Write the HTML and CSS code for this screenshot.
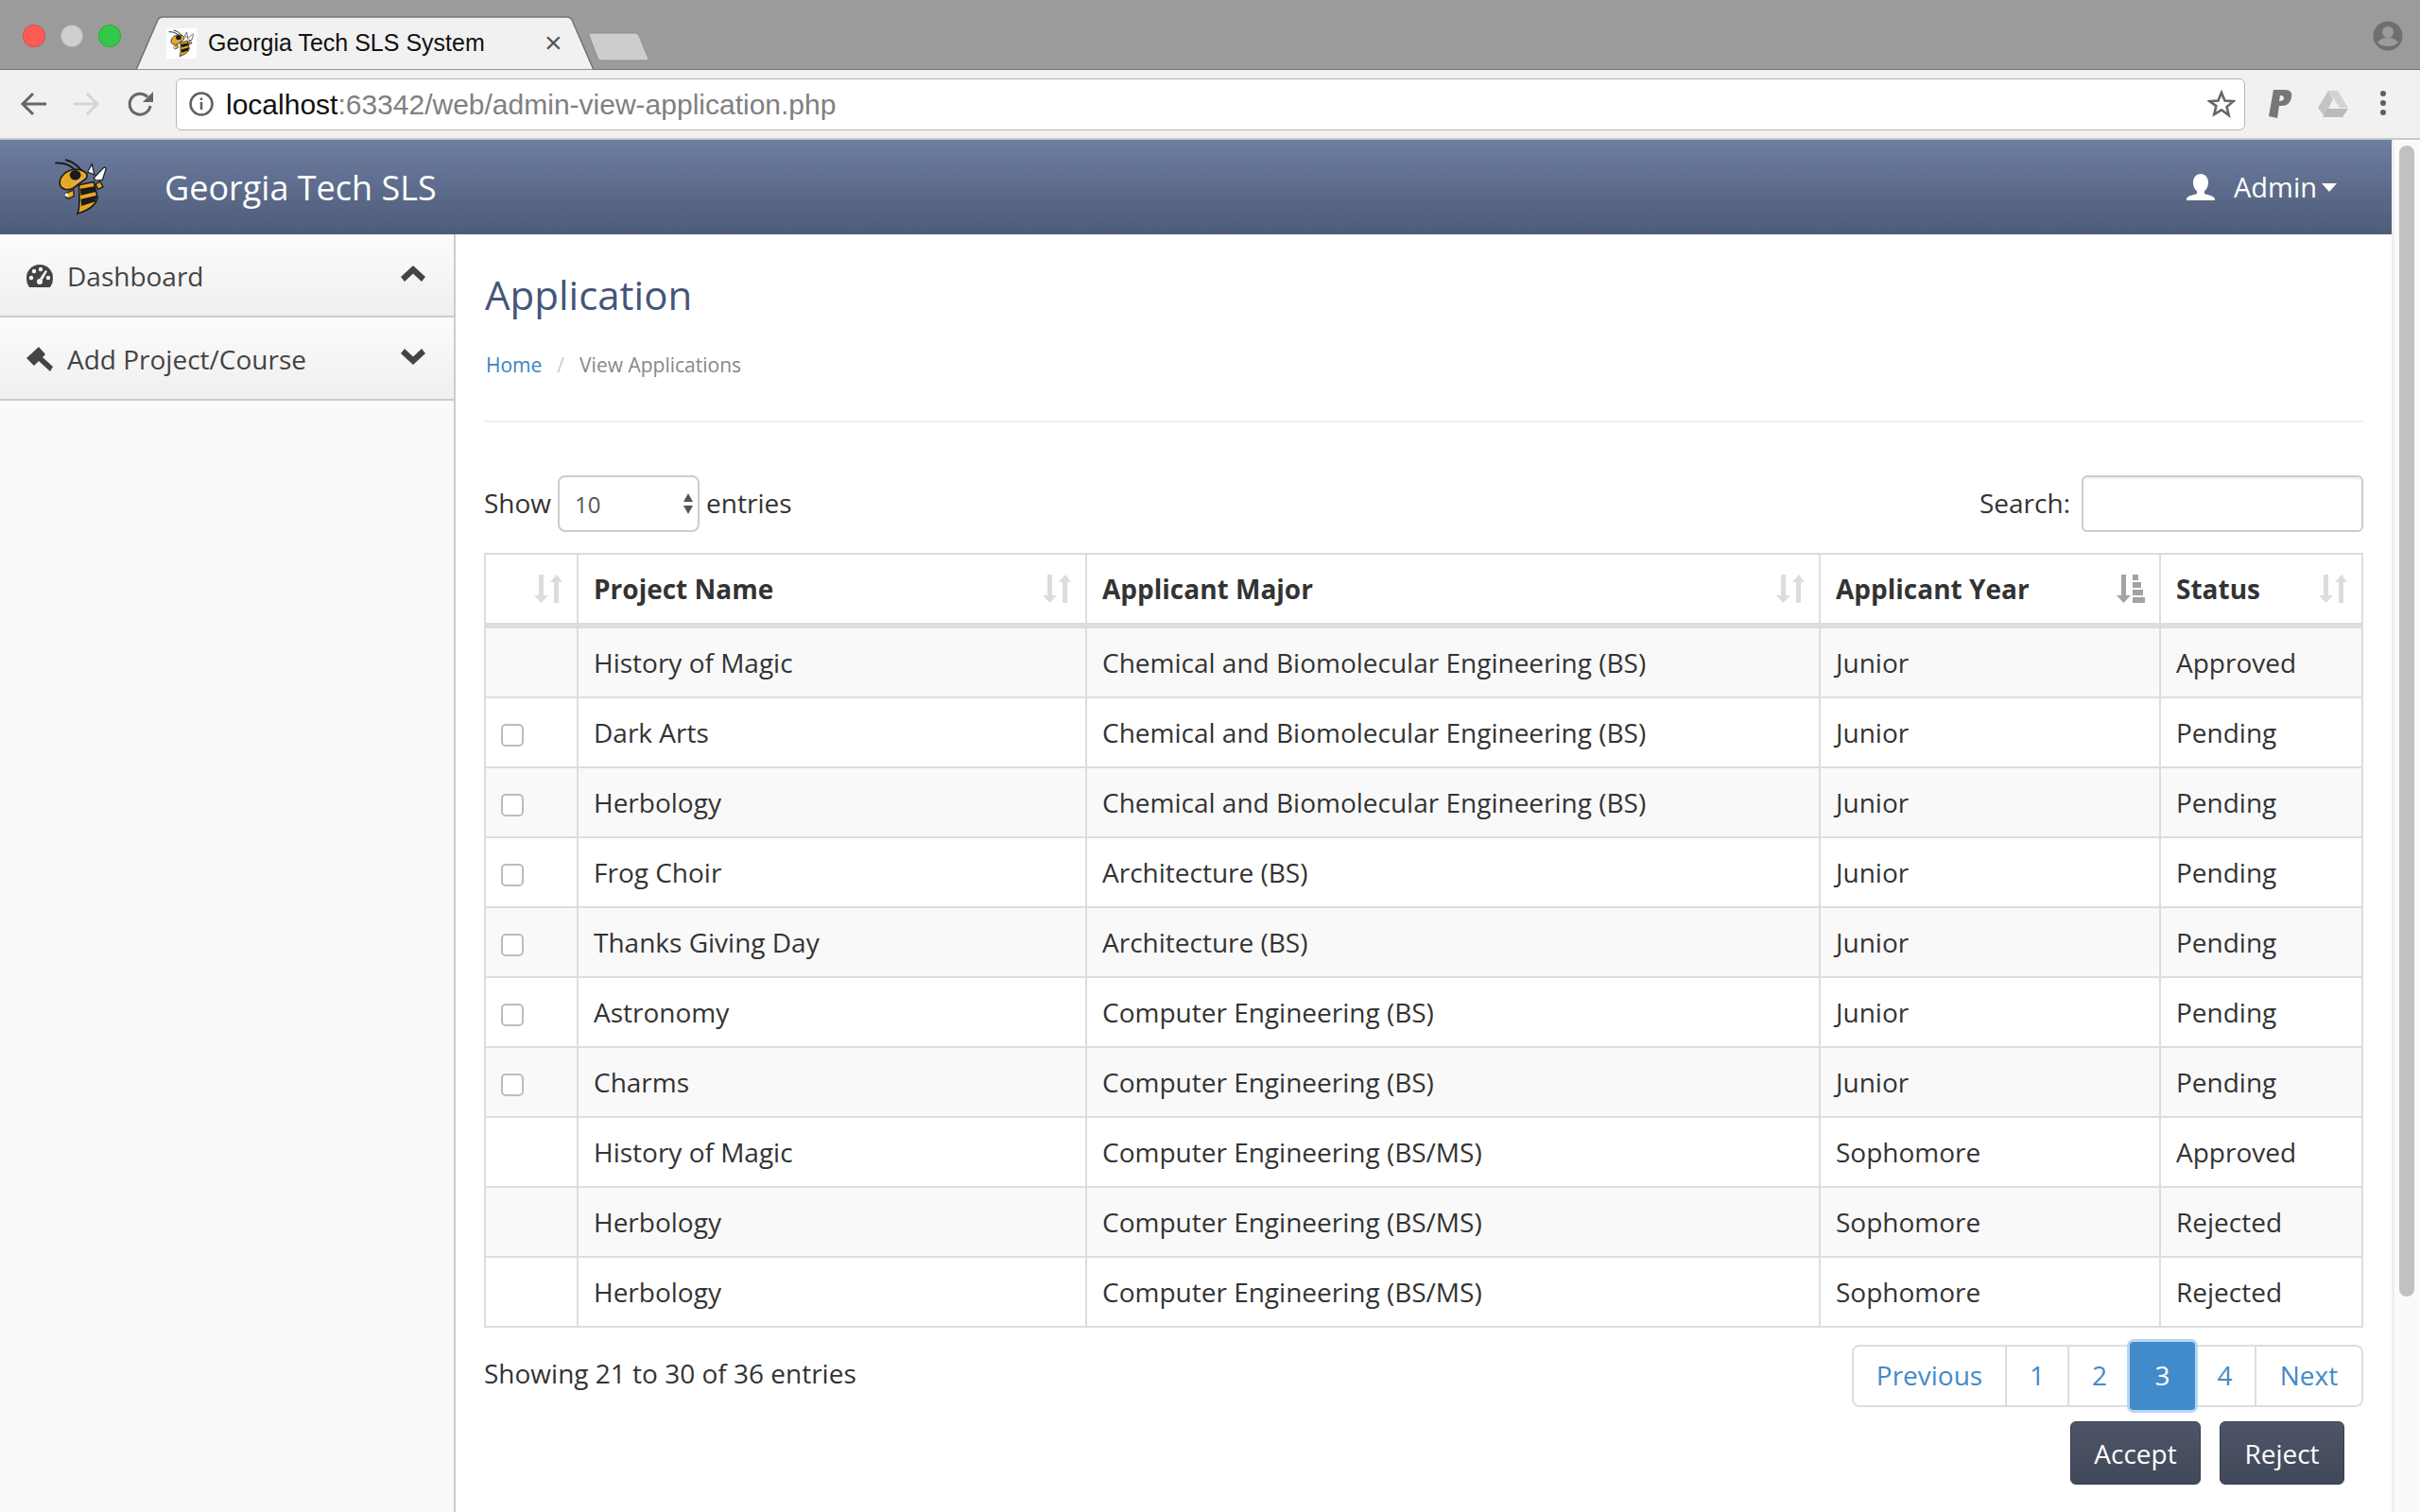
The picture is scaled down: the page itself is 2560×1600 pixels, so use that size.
FILE: index.html
```html
<!DOCTYPE html>
<html lang="en">
<head>
    <meta charset="UTF-8">
    <title>Georgia Tech SLS System</title>
    <link rel="stylesheet" href="styles.css">
</head>
<body>
    <svg class="defs" width="0" height="0">
        <symbol id="bee" viewBox="170 140 175 190">
            <path d="M240 182C225 165 200 155 175 157M258 180C245 165 228 152 208 147" fill="none" stroke="#1b1b1b" stroke-width="6" stroke-linecap="round"/>
            <path d="M278 186L292 160L300 195ZM298 205L332 170L338 174L326 212L304 214Z" fill="#fff" stroke="#222" stroke-width="4"/>
            <path d="M250 228L298 218L310 268C305 295 275 312 245 321C256 300 250 260 250 228Z" fill="#e9a823" stroke="#1b1b1b" stroke-width="5"/>
            <path d="M254 240L302 232L305 250L256 262ZM256 274L308 262L303 282L258 296Z" fill="#1b1b1b"/>
            <path d="M304 226L318 217L328 234L312 242Z" fill="#e9a823" stroke="#1b1b1b" stroke-width="4"/>
            <path d="M206 256L232 244L234 264L218 272C208 272 202 264 206 256Z" fill="#e9a823" stroke="#1b1b1b" stroke-width="4"/>
            <circle cx="210" cy="260" r="6" fill="#eee"/>
            <path d="M188 226C184 198 214 174 250 178C274 184 282 196 272 208L232 238C212 248 192 242 188 226Z" fill="#e9a823" stroke="#1b1b1b" stroke-width="5"/>
            <ellipse cx="238" cy="196" rx="18" ry="16" fill="#1b1b1b"/>
            <path d="M226 226L268 204" stroke="#bbb" stroke-width="3"/>
        </symbol>
        <symbol id="sort" viewBox="0 0 30 30">
            <path d="M5 0h5v22h5l-7.500 8L0 22h5zM17 8l7-8 6 8h-4v22h-5V8z"/>
        </symbol>
    </svg>

    <div class="browser">
        <div class="tabstrip">
            <div class="lights">
                <span class="light red"></span>
                <span class="light grey"></span>
                <span class="light green"></span>
            </div>
            <div class="tab">
                <svg class="tab-shape" viewBox="0 0 484 57" preserveAspectRatio="none">
                    <path d="M0 57L23 4C24 2 25 1 28 1H456C459 1 460 2 461 4L484 57Z" fill="#f1f1f1" stroke="#737373" stroke-width="1.500"/>
                </svg>
                <span class="favicon"><svg width="28" height="30"><use href="#bee"/></svg></span>
                <span class="tab-title">Georgia Tech SLS System</span>
                <span class="tab-close">×</span>
            </div>
            <svg class="newtab" width="66" height="32" viewBox="0 0 66 32">
                <path d="M2 2H50C52 2 53 3 54 5L64 29C64 30 63 31 62 31H14C12 31 11 30 10 28L1 4C1 3 1 2 2 2Z" fill="#cdcdcd" stroke="#8d8d8d"/>
            </svg>
            <svg class="profile" width="32" height="32" viewBox="0 0 32 32">
                <circle cx="16" cy="16" r="15.500" fill="#6f6f6f"/>
                <circle cx="16" cy="12" r="6" fill="#9b9b9b"/>
                <path d="M5 23c3-4 7-5 11-5s8 1 11 5c-3 3-7 4-11 4s-8-1-11-4z" fill="#9b9b9b"/>
            </svg>
        </div>

        <div class="toolbar">
            <svg class="tool" width="30" height="30" viewBox="0 0 30 30" fill="none" stroke="#666" stroke-width="3"><path d="M28 15H4M14 4L3 15l11 11"/></svg>
            <svg class="tool" width="30" height="30" viewBox="0 0 30 30" fill="none" stroke="#d4d4d4" stroke-width="3"><path d="M2 15h24M16 4l11 11-11 11"/></svg>
            <svg class="tool tool-reload" width="30" height="30" viewBox="0 0 30 30" fill="none"><path d="M25 17a11 11 0 1 1-3-9.500" stroke="#666" stroke-width="3"/><path d="M28 2v11H17z" fill="#666"/></svg>
            <div class="omnibox">
                <svg width="26" height="26" viewBox="0 0 26 26" fill="none" stroke="#5f5f5f" stroke-width="2.500"><circle cx="13" cy="13" r="11.500"/><path d="M13 11v8M13 6.500v2.500"/></svg>
                <span class="url"><b>localhost</b>:63342/web/admin-view-application.php</span>
                <svg class="star" width="30" height="30" viewBox="0 0 30 30" fill="none" stroke="#666" stroke-width="2.600"><path d="M15 3l3.500 8.500 9 .7-6.900 5.900 2.100 8.900L15 21.300 7.300 26l2.100-8.900L2.500 12.200l9-.7z"/></svg>
            </div>
            <div class="ext">
                <svg width="26" height="32" viewBox="0 0 26 32"><path d="M7 1h11c6 0 8 3 7 8-1 6-5 9-10 9h-3l-2 13-9-2L6 1z" fill="#777"/><path d="M13 7l-1 6c3 0 5-1 5-3s-1-3-4-3z" fill="#f1f1f1"/></svg>
                <svg width="32" height="28" viewBox="0 0 32 28"><path d="M11 0h10l11 18h-9z" fill="#d3d3d3"/><path d="M11 0l5 9-9 18-7-9z" fill="#c4c4c4"/><path d="M10 19h22l-6 9H5z" fill="#bbb"/></svg>
                <svg class="ext-menu" width="6" height="28" viewBox="0 0 6 28" fill="#5f5f5f"><circle cx="3" cy="3" r="3"/><circle cx="3" cy="13" r="3"/><circle cx="3" cy="23" r="3"/></svg>
            </div>
        </div>

        <div class="viewport">
            <div class="app">
                <header class="navbar">
                    <svg class="logo" width="58" height="62"><use href="#bee"/></svg>
                    <a class="brand" href="#">Georgia Tech SLS</a>
                    <div class="usermenu">
                        <svg width="30" height="28" viewBox="0 0 30 28" fill="#fff"><path d="M15 0c5 0 8 4 8 9 0 4-2 8-4 9v3c3 1 9 2 11 5v2H0v-2c2-3 8-4 11-5v-3c-2-1-4-5-4-9 0-5 3-9 8-9z"/></svg>
                        <span class="username">Admin</span>
                        <span class="caret"></span>
                    </div>
                </header>

                <div class="layout">
                    <aside class="sidebar">
                        <a class="side-item" href="#">
                            <svg class="side-icon" width="28" height="24" viewBox="0 0 28 24"><path d="M14 0a14 14 0 0 1 14 14c0 4-1 7-3 10H3c-2-3-3-6-3-10A14 14 0 0 1 14 0z" fill="#444"/><g fill="#fafafa"><circle cx="5" cy="14" r="2.200"/><circle cx="8" cy="7" r="2.200"/><circle cx="15" cy="5" r="2.200"/><circle cx="23" cy="14" r="2.200"/><path d="M20 6l2 1-5 9-3-1z"/><circle cx="14" cy="18" r="3"/></g></svg>
                            <span class="side-label">Dashboard</span>
                            <svg class="chev" width="26" height="17" viewBox="0 0 26 17"><path d="M13 0l13 12-4 5-9-8.500L4 17l-4-5z"/></svg>
                        </a>
                        <a class="side-item" href="#">
                            <svg class="side-icon" width="28" height="26" viewBox="0 0 28 26"><path d="M0 12L13 0l7 8-3 3 11 10-3 5-12-11-5 5z" fill="#444"/></svg>
                            <span class="side-label">Add Project/Course</span>
                            <svg class="chev" width="26" height="17" viewBox="0 0 26 17"><path d="M13 17L0 5l4-5 9 8.500L22 0l4 5z"/></svg>
                        </a>
                    </aside>

                    <main class="content">
                        <h1 class="page-title">Application</h1>
                        <ol class="crumbs">
                            <li><a href="#">Home</a></li>
                            <li class="crumb-sep">/</li>
                            <li class="crumb-now">View Applications</li>
                        </ol>
                        <hr class="rule">

                        <div class="table-top">
                            <div class="length">
                                Show
                                <span class="select-wrap">
                                    <select class="select"><option>10</option><option>25</option><option>50</option></select>
                                    <svg class="select-arrows" width="12" height="22" viewBox="0 0 12 22" fill="#555"><path d="M6 0l5 9H1zM6 22L1 13h10z"/></svg>
                                </span>
                                entries
                            </div>
                            <label class="search">Search: <input class="search-box" type="text"></label>
                        </div>

                        <table class="apps">
                            <colgroup>
                                <col class="c-check"><col class="c-project"><col class="c-major"><col class="c-year"><col class="c-status">
                            </colgroup>
                            <thead>
                                <tr>
                                    <th><svg class="sort" width="30" height="30"><use href="#sort"/></svg></th>
                                    <th>Project Name<svg class="sort" width="30" height="30"><use href="#sort"/></svg></th>
                                    <th>Applicant Major<svg class="sort" width="30" height="30"><use href="#sort"/></svg></th>
                                    <th>Applicant Year<svg class="sort sort-on" width="30" height="30" viewBox="0 0 30 30"><path d="M5 0h5v22h5l-7.500 8L0 22h5z"/><path d="M17 0h6v6h-6zM17 8h9v6h-9zM17 16h11v6H17zM17 24h13v6H17z"/></svg></th>
                                    <th>Status<svg class="sort" width="30" height="30"><use href="#sort"/></svg></th>
                                </tr>
                            </thead>
                            <tbody>
                                <tr><td></td><td>History of Magic</td><td>Chemical and Biomolecular Engineering (BS)</td><td>Junior</td><td>Approved</td></tr>
                                <tr><td><input class="check" type="checkbox"></td><td>Dark Arts</td><td>Chemical and Biomolecular Engineering (BS)</td><td>Junior</td><td>Pending</td></tr>
                                <tr><td><input class="check" type="checkbox"></td><td>Herbology</td><td>Chemical and Biomolecular Engineering (BS)</td><td>Junior</td><td>Pending</td></tr>
                                <tr><td><input class="check" type="checkbox"></td><td>Frog Choir</td><td>Architecture (BS)</td><td>Junior</td><td>Pending</td></tr>
                                <tr><td><input class="check" type="checkbox"></td><td>Thanks Giving Day</td><td>Architecture (BS)</td><td>Junior</td><td>Pending</td></tr>
                                <tr><td><input class="check" type="checkbox"></td><td>Astronomy</td><td>Computer Engineering (BS)</td><td>Junior</td><td>Pending</td></tr>
                                <tr><td><input class="check" type="checkbox"></td><td>Charms</td><td>Computer Engineering (BS)</td><td>Junior</td><td>Pending</td></tr>
                                <tr><td></td><td>History of Magic</td><td>Computer Engineering (BS/MS)</td><td>Sophomore</td><td>Approved</td></tr>
                                <tr><td></td><td>Herbology</td><td>Computer Engineering (BS/MS)</td><td>Sophomore</td><td>Rejected</td></tr>
                                <tr><td></td><td>Herbology</td><td>Computer Engineering (BS/MS)</td><td>Sophomore</td><td>Rejected</td></tr>
                            </tbody>
                        </table>

                        <div class="table-bottom">
                            <div class="info">Showing 21 to 30 of 36 entries</div>
                            <div class="pager">
                                <a class="page page-prev" href="#">Previous</a>
                                <a class="page page-1" href="#">1</a>
                                <a class="page page-2" href="#">2</a>
                                <a class="page page-on" href="#">3</a>
                                <a class="page page-4" href="#">4</a>
                                <a class="page page-next" href="#">Next</a>
                            </div>
                        </div>
                        <div class="actions">
                            <button class="btn btn-accept">Accept</button>
                            <button class="btn btn-reject">Reject</button>
                        </div>
                    </main>
                </div>
            </div>
            <div class="scrollbar"><div class="thumb"></div></div>
        </div>
    </div>
</body>
</html>
```

FILE: styles.css
```css
html, body {
    margin: 0;
    height: 100%;
    overflow: hidden;
}
body {
    font-family: "Open Sans", "Noto Sans", sans-serif;
    font-size: 28px;
    color: #333;
    background: #fff;
}
a {
    text-decoration: none;
}
.defs {
    position: absolute;
}
.browser {
    display: flex;
    flex-direction: column;
    height: 1600px;
}

/* browser chrome */
.tabstrip {
    height: 74px;
    box-sizing: border-box;
    background: #9b9b9b;
    border-bottom: 1px solid #737373;
    display: flex;
    align-items: flex-start;
    flex: none;
}
.lights {
    display: flex;
    gap: 16px;
    padding: 26px 0 0 24px;
}
.light {
    width: 24px;
    height: 24px;
    border-radius: 50%;
    box-sizing: border-box;
    border: 1px solid rgba(0, 0, 0, .15);
}
.red { background: #fc5b57; }
.grey { background: #cfcfcf; }
.green { background: #34c84a; }
.tab {
    position: relative;
    width: 484px;
    height: 57px;
    margin: 17px 0 0 16px;
    display: flex;
    align-items: center;
    font-family: "Liberation Sans", Arial, sans-serif;
    font-size: 25px;
    color: #111;
    padding-left: 32px;
    box-sizing: border-box;
    flex: none;
}
.tab-shape {
    position: absolute;
    left: 0;
    top: 0;
    width: 100%;
    height: 100%;
}
.favicon, .tab-title, .tab-close {
    position: relative;
}
.favicon {
    width: 32px;
    height: 32px;
    background: #fff;
    display: flex;
    align-items: center;
    justify-content: center;
}
.tab-title {
    margin-left: 12px;
    width: 367px;
    white-space: nowrap;
    margin-right: -11px;
}
.tab-close {
    font-size: 32px;
    color: #555;
}
.newtab {
    margin: 33px 0 0 -6px;
    flex: none;
}
.profile {
    margin: 22px 18px 0 auto;
}
.toolbar {
    height: 74px;
    box-sizing: border-box;
    background: #f1f1f1;
    border-bottom: 2px solid #c8c8c8;
    display: flex;
    align-items: center;
    flex: none;
    padding-left: 21px;
}
.tool {
    margin-right: 25px;
    flex: none;
}
.tool-reload {
    margin-left: 3px;
    margin-right: 22px;
}
.omnibox {
    width: 2189px;
    height: 55px;
    box-sizing: border-box;
    background: #fff;
    border: 1px solid #b5b5b5;
    border-radius: 6px;
    display: flex;
    align-items: center;
    padding: 0 9px 0 13px;
    font-family: "Liberation Sans", Arial, sans-serif;
    font-size: 30px;
    color: #808080;
}
.url {
    margin-left: 13px;
    padding-top: 2px;
}
.url b {
    font-weight: normal;
    color: #111;
}
.star {
    margin-left: auto;
}
.ext {
    display: flex;
    align-items: center;
    gap: 27px;
    margin-left: 24px;
}
.ext-menu {
    margin-left: 7px;
}

/* page */
.viewport {
    flex: 1;
    display: flex;
    min-height: 0;
}
.app {
    flex: 1;
    display: flex;
    flex-direction: column;
    min-width: 0;
}
.scrollbar {
    width: 30px;
    box-sizing: border-box;
    background: #fafafa;
    border-left: 3px solid #eee;
    padding: 6px 6px 0 5px;
    flex: none;
}
.thumb {
    height: 1218px;
    background: #c1c1c1;
    border-radius: 8px;
}
.navbar {
    height: 100px;
    background: linear-gradient(#6e7ea1, #4e5b78);
    display: flex;
    align-items: center;
    padding: 0 58px 0 57px;
    flex: none;
}
.logo {
    flex: none;
}
.brand {
    margin-left: 59px;
    color: #fff;
    font-size: 36px;
}
.usermenu {
    margin-left: auto;
    display: flex;
    align-items: center;
    color: #fff;
    font-size: 29px;
}
.username {
    margin-left: 20px;
    margin-top: -2px;
    margin-right: -3px;
}
.caret {
    margin-left: 8px;
    border-top: 9px solid #fff;
    border-left: 8px solid transparent;
    border-right: 8px solid transparent;
}
.layout {
    flex: 1;
    display: flex;
    min-height: 0;
}
.sidebar {
    width: 482px;
    box-sizing: border-box;
    background: #fafafa;
    border-right: 2px solid #ccc;
    flex: none;
}
.side-item {
    height: 88px;
    box-sizing: border-box;
    background: linear-gradient(#fcfcfc, #efefef);
    border-bottom: 2px solid #ccc;
    display: flex;
    align-items: center;
    padding: 2px 30px 0 28px;
    color: #444;
    font-size: 28px;
}
.side-icon {
    flex: none;
}
.side-label {
    margin-left: 15px;
}
.chev {
    margin-left: auto;
    margin-top: -6px;
    fill: #444;
}
.content {
    flex: 1;
    min-width: 0;
    padding: 0 30px 0 30px;
}
.page-title {
    margin: 0 0 0 1px;
    padding-top: 33px;
    font-size: 42px;
    font-weight: normal;
    line-height: 62px;
    color: #44557a;
}
.crumbs {
    list-style: none;
    margin: 27px 0 0 2px;
    padding: 0;
    display: flex;
    font-size: 21px;
    line-height: 32px;
    color: #888;
}
.crumbs a {
    color: #3b82c4;
}
.crumb-sep {
    color: #ccc;
    margin: 0 16px;
}
.rule {
    border: 0;
    border-top: 2px solid #eee;
    margin: 43px 0 0;
}
.table-top {
    display: flex;
    justify-content: space-between;
    align-items: center;
    margin-top: 56px;
    height: 60px;
}
.length, .search {
    display: flex;
    align-items: center;
    padding-bottom: 3px;
}
.select-wrap {
    position: relative;
    margin: 3px 7px 0;
}
.select {
    appearance: none;
    display: block;
    width: 150px;
    height: 60px;
    box-sizing: border-box;
    border: 2px solid #ccc;
    border-radius: 8px;
    background: #fff;
    padding: 0 16px;
    font-family: inherit;
    font-size: 24px;
    color: #555;
}
.select-arrows {
    position: absolute;
    right: 6px;
    top: 19px;
    pointer-events: none;
}
.search-box {
    width: 298px;
    height: 60px;
    box-sizing: border-box;
    border: 2px solid #ccc;
    border-radius: 6px;
    margin: 3px 0 0 12px;
    box-shadow: inset 0 2px 2px rgba(0, 0, 0, .06);
}
.apps {
    width: 100%;
    margin-top: 22px;
    border-collapse: collapse;
    table-layout: fixed;
    border: 2px solid #ddd;
}
.c-check { width: 98px; }
.c-project { width: 538px; }
.c-major { width: 776px; }
.c-year { width: 360px; }
.apps th, .apps td {
    border: 2px solid #ddd;
    padding: 0 16px;
    text-align: left;
    white-space: nowrap;
}
.apps th {
    height: 72px;
    border-bottom-width: 6px;
    font-weight: bold;
    position: relative;
}
.apps td {
    height: 72px;
    line-height: 40px;
}
.apps tbody tr:nth-child(odd) {
    background: #f9f9f9;
}
.sort {
    position: absolute;
    right: 15px;
    top: 21px;
    fill: #dcdcdc;
}
.sort-on {
    fill: #a3a3a3;
}
.check {
    appearance: none;
    display: block;
    margin: 5px 0 0 0;
    width: 24px;
    height: 24px;
    box-sizing: border-box;
    border: 2px solid #bcbcbc;
    border-radius: 5px;
    background: #fff;
}
.table-bottom {
    display: flex;
    justify-content: space-between;
    margin-top: 18px;
}
.info {
    line-height: 60px;
}
.pager {
    display: flex;
    height: 66px;
    box-sizing: border-box;
    border: 2px solid #ddd;
    border-radius: 8px;
}
.page {
    display: flex;
    align-items: center;
    justify-content: center;
    box-sizing: border-box;
    padding-bottom: 3px;
    color: #428bca;
    border-right: 2px solid #ddd;
}
.page-prev { width: 162px; }
.page-1 { width: 66px; }
.page-2 { width: 64px; border-right: 0; }
.page-4 { width: 65px; }
.page-next { width: 111px; border-right: 0; }
.page-on {
    width: 69px;
    height: 72px;
    margin-top: -5px;
    background: #428bca;
    color: #fff;
    border: 0;
    border-radius: 4px;
    box-shadow: 0 0 0 3px #b7d6f5;
}
.actions {
    display: flex;
    justify-content: flex-end;
    gap: 20px;
    margin-top: 15px;
    padding-right: 20px;
}
.btn {
    height: 67px;
    box-sizing: border-box;
    border: 1px solid #363d4f;
    border-radius: 6px;
    background: linear-gradient(#4e5568, #414859);
    color: #fff;
    font-family: inherit;
    font-size: 28px;
}
.btn-accept { width: 138px; }
.btn-reject { width: 132px; }
```
